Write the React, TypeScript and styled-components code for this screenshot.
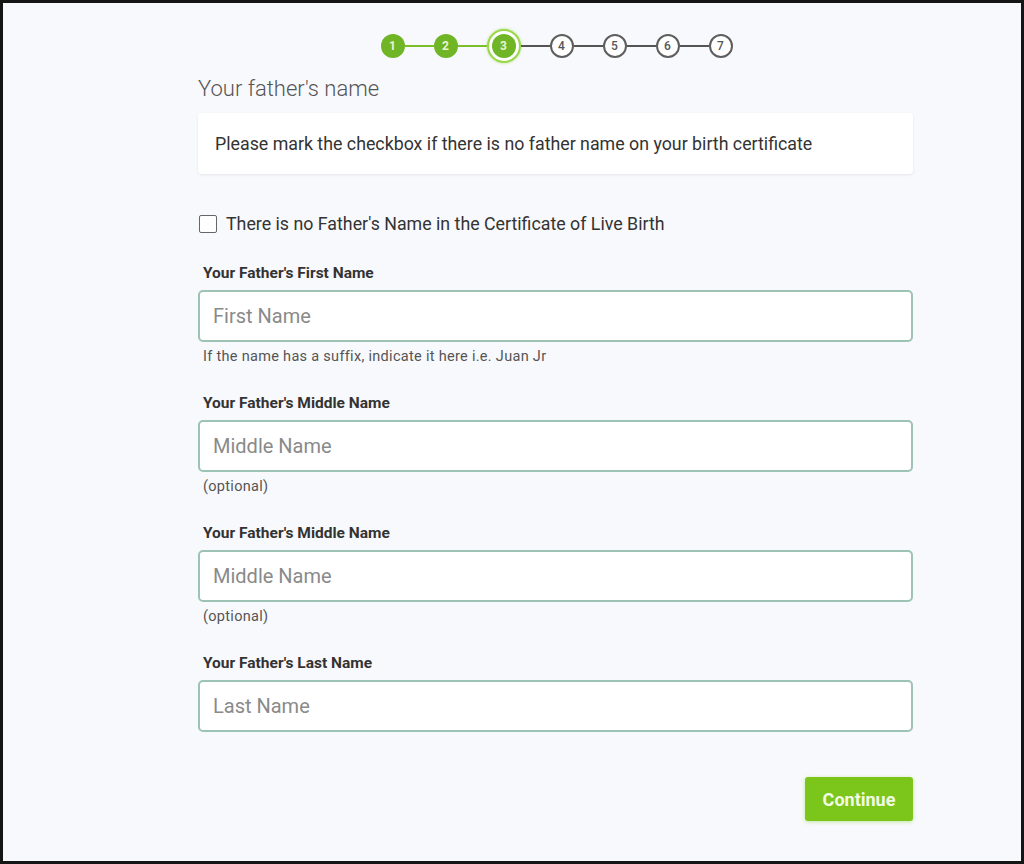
import React from "react";
import styled, { createGlobalStyle, css } from "styled-components";

const GlobalStyle = createGlobalStyle`
  html, body {
    margin: 0;
    padding: 0;
  }
  body {
    font-family: Roboto, "Liberation Sans", Arial, sans-serif;
    background: #111;
  }
  * { box-sizing: border-box; }
`;

const steps = [1, 2, 3, 4, 5, 6, 7];
const current = 3;

const fields = [
  { label: "Your Father's First Name", placeholder: "First Name", hint: "If the name has a suffix, indicate it here i.e. Juan Jr" },
  { label: "Your Father's Middle Name", placeholder: "Middle Name", hint: "(optional)" },
  { label: "Your Father's Middle Name", placeholder: "Middle Name", hint: "(optional)" },
  { label: "Your Father's Last Name", placeholder: "Last Name", hint: "" },
];

const App: React.FC = () => {
  return (
    <Frame>
      <GlobalStyle />
      <Content>
        <Stepper>
          {steps.map((n, i) => (
            <React.Fragment key={n}>
              {i > 0 && <Connector done={n <= current} />}
              {n === current ? (
                <ActiveRing>
                  <Step state="done">{n}</Step>
                </ActiveRing>
              ) : (
                <Step state={n < current ? "done" : "todo"}>{n}</Step>
              )}
            </React.Fragment>
          ))}
        </Stepper>

        <Title>Your father's name</Title>

        <InfoBox>Please mark the checkbox if there is no father name on your birth certificate</InfoBox>

        <CheckRow>
          <CheckBox type="checkbox" />
          <span>There is no Father's Name in the Certificate of Live Birth</span>
        </CheckRow>

        {fields.map((f, i) => (
          <Field key={i}>
            <Label>{f.label}</Label>
            <Input placeholder={f.placeholder} />
            {f.hint && <Hint>{f.hint}</Hint>}
          </Field>
        ))}

        <Actions>
          <ContinueButton>Continue</ContinueButton>
        </Actions>
      </Content>
    </Frame>
  );
};

const Frame = styled.div`
  width: 1024px;
  height: 864px;
  border: 3px solid #151515;
  background: #f8f9fc;
  overflow: hidden;
`;

const Content = styled.div`
  width: 715px;
  margin-left: 195px;
  padding-top: 25px;
  display: flex;
  flex-direction: column;
`;

const Stepper = styled.div`
  display: flex;
  align-items: center;
  justify-content: center;
  height: 36px;
  padding-left: 2px;
`;

const Connector = styled.div<{ done: boolean }>`
  width: 29px;
  height: 2px;
  background: ${(p) => (p.done ? "#7cbf2a" : "#555")};
`;

const Step = styled.div<{ state: "done" | "todo" }>`
  width: 24px;
  height: 24px;
  border-radius: 50%;
  display: flex;
  align-items: center;
  justify-content: center;
  font-size: 12px;
  font-weight: 700;
  ${(p) =>
    p.state === "done"
      ? css`
          background: #6fb526;
          color: #e8f5d0;
        `
      : css`
          background: #fff;
          border: 2px solid #5e5e5e;
          color: #555;
          font-weight: 500;
        `}
`;

const ActiveRing = styled.div`
  width: 34px;
  height: 34px;
  border-radius: 50%;
  border: 2px solid #9ad84a;
  background: #fff;
  display: flex;
  align-items: center;
  justify-content: center;
  box-shadow: 0 0 3px rgba(140, 210, 60, 0.6);
`;

const Title = styled.h1`
  margin: 11px 0 0 0;
  font-size: 22px;
  font-weight: 300;
  color: #555;
  line-height: 28px;
`;

const InfoBox = styled.div`
  margin-top: 10px;
  background: #fff;
  border-radius: 4px;
  box-shadow: 0 1px 3px rgba(0, 0, 0, 0.08);
  height: 61px;
  padding: 0 17px;
  display: flex;
  align-items: center;
  font-size: 17.8px;
  color: #333;
`;

const CheckRow = styled.label`
  margin-top: 39px;
  display: flex;
  align-items: center;
  gap: 9px;
  font-size: 17.8px;
  color: #333;
  padding-left: 1px;
`;

const CheckBox = styled.input`
  appearance: none;
  margin: 0;
  width: 18px;
  height: 18px;
  border: 1.5px solid #666;
  border-radius: 2px;
  background: #fff;
`;

const Field = styled.div`
  display: flex;
  flex-direction: column;
  margin-top: 30px;
  & + & {
    margin-top: 29px;
  }
`;

const Label = styled.div`
  font-size: 15.5px;
  font-weight: 700;
  color: #333;
  padding-left: 5px;
  margin-bottom: 8px;
  line-height: 18px;
`;

const Input = styled.input`
  height: 52px;
  border: 2px solid #9cc3b4;
  border-radius: 5px;
  background: #fff;
  padding: 0 13px;
  font-family: inherit;
  font-size: 20px;
  color: #333;
  &::placeholder {
    color: #8a8a8a;
  }
`;

const Hint = styled.div`
  font-size: 14.5px;
  letter-spacing: 0.3px;
  color: #555;
  padding-left: 5px;
  margin-top: 6px;
  line-height: 17px;
`;

const Actions = styled.div`
  display: flex;
  justify-content: flex-end;
  margin-top: 45px;
`;

const ContinueButton = styled.button`
  width: 108px;
  height: 44px;
  border: none;
  border-radius: 3px;
  background: #7cc51a;
  color: #f2fbe4;
  font-family: inherit;
  font-size: 18px;
  font-weight: 700;
  box-shadow: 0 1px 4px rgba(120, 200, 40, 0.4);
`;

export default App;
